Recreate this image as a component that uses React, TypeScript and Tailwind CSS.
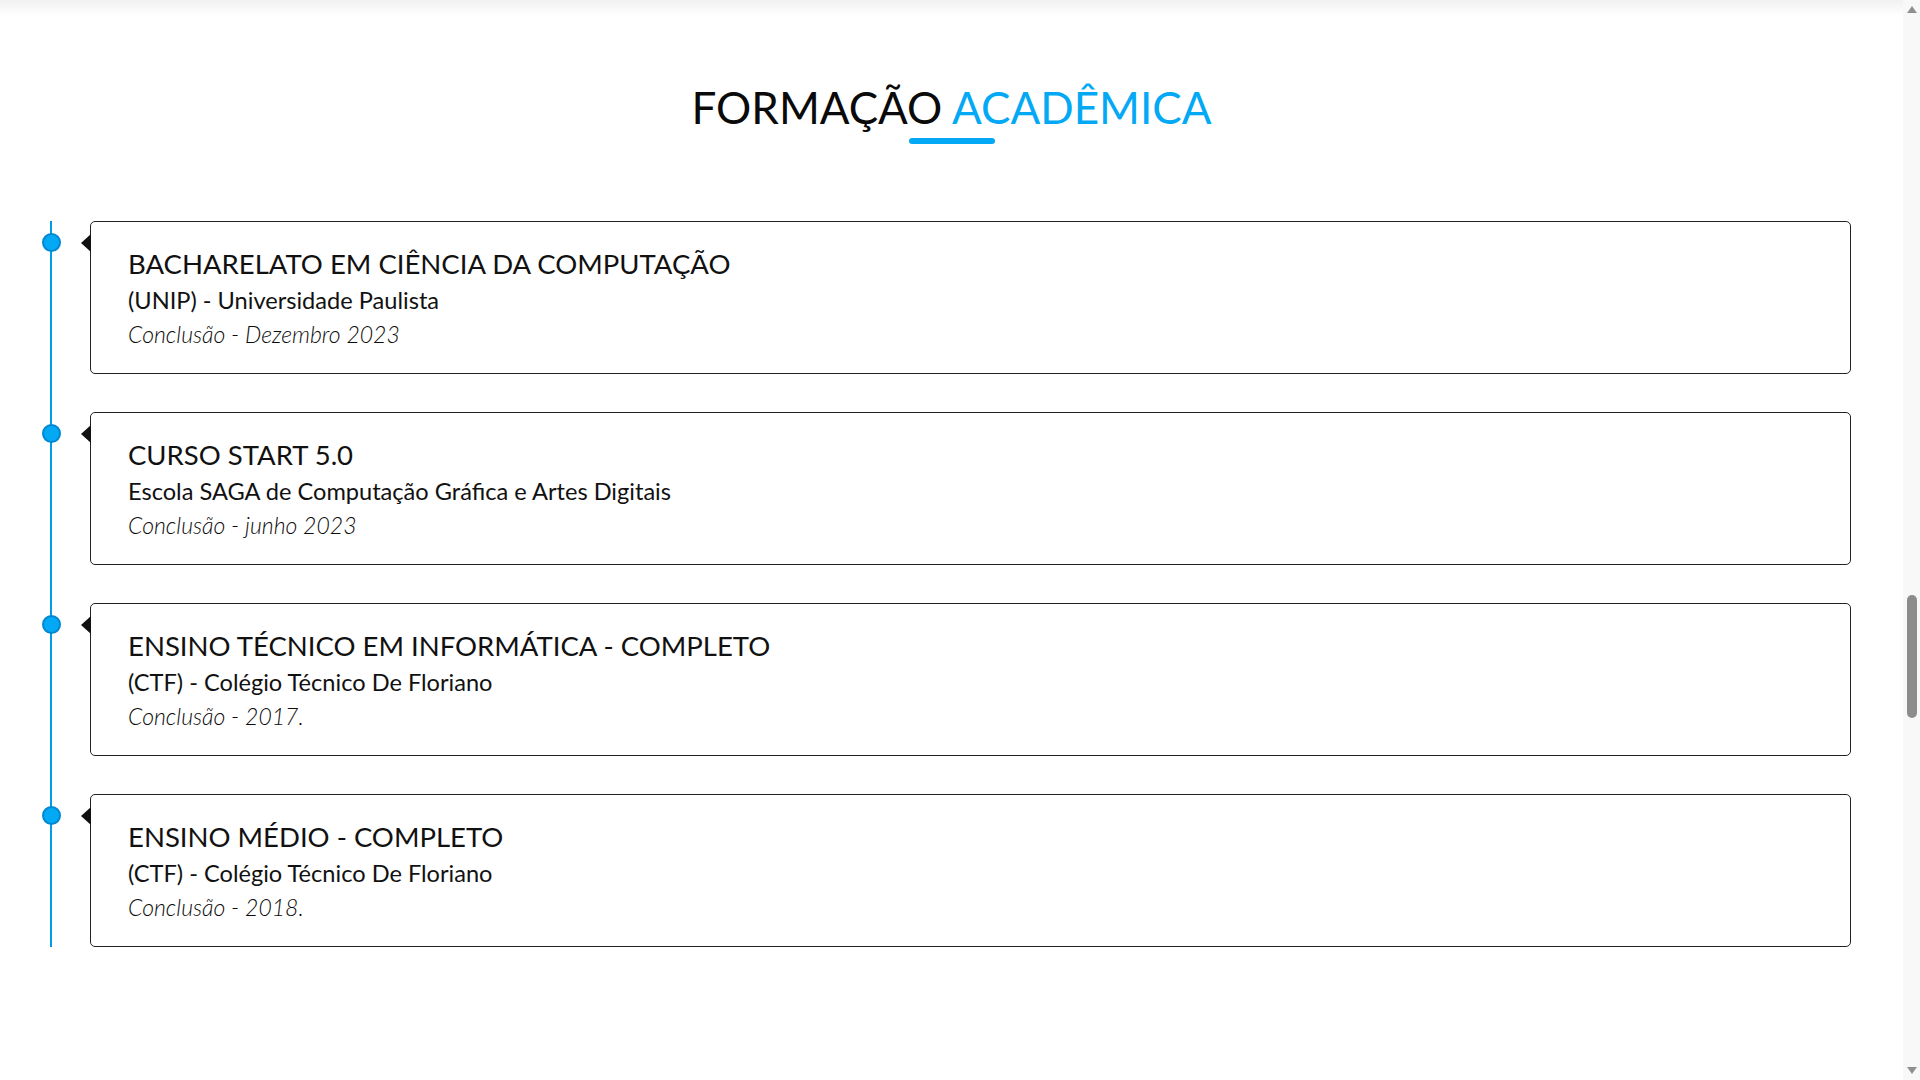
const items = [
  {
    title: 'BACHARELATO EM CIÊNCIA DA COMPUTAÇÃO',
    school: '(UNIP) - Universidade Paulista',
    date: 'Conclusão - Dezembro 2023',
  },
  {
    title: 'CURSO START 5.0',
    school: 'Escola SAGA de Computação Gráfica e Artes Digitais',
    date: 'Conclusão - junho 2023',
  },
  {
    title: 'ENSINO TÉCNICO EM INFORMÁTICA - COMPLETO',
    school: '(CTF) - Colégio Técnico De Floriano',
    date: 'Conclusão - 2017.',
  },
  {
    title: 'ENSINO MÉDIO - COMPLETO',
    school: '(CTF) - Colégio Técnico De Floriano',
    date: 'Conclusão - 2018.',
  },
];

function Scrollbar() {
  return (
    <div className="flex h-full w-[17px] shrink-0 flex-col items-center bg-[#f8f8f8]">
      <span className="mt-[6px] h-0 w-0 border-x-[5px] border-b-[7px] border-x-transparent border-b-[#8f8f8f]" />
      <div className="mt-[582px] h-[123px] w-[10px] rounded-full bg-[#8c8c8c]" />
      <div className="flex-1" />
      <span className="mb-[6px] h-0 w-0 border-x-[5px] border-t-[7px] border-x-transparent border-t-[#8f8f8f]" />
    </div>
  );
}

export default function App() {
  return (
    <div className="flex h-[1080px] overflow-hidden bg-white font-['Lato','Liberation_Sans',sans-serif] text-[#111]">
      <main className="min-w-0 flex-1">
        <div className="h-[16px] bg-gradient-to-b from-[#f1f1f1] to-white" />

        <section className="pt-[65px]">
          <h2 className="text-center text-[44px] leading-[52px] font-normal text-[#0a0a0a]">
            FORMAÇÃO <span className="text-[#03a9f4]">ACADÊMICA</span>
          </h2>
          <div className="mx-auto mt-[5px] h-[6px] w-[86px] rounded-full bg-[#03a9f4]" />

          {/* Timeline */}
          <div className="ml-[50px] mr-[52px] mt-[77px] flex flex-col gap-[38px] border-l-2 border-[#039be5]">
            {items.map((item) => (
              <div key={item.title} className="relative pl-[38px]">
                <span className="absolute left-[-10px] top-[12px] h-[19px] w-[19px] rounded-full border-2 border-[#0288d1] bg-[#03a9f4]" />
                <span className="absolute left-[29px] top-[13px] h-0 w-0 border-y-[9px] border-r-[10px] border-y-transparent border-r-[#111]" />
                <div className="h-[153px] rounded-[5px] border-[1.5px] border-[#222] bg-white pl-[37px] pt-[25px]">
                  <h3 className="text-[27.5px] leading-[34px] font-normal text-[#111]">{item.title}</h3>
                  <p className="mt-[2px] text-[23.6px] leading-[34px] text-[#111]">{item.school}</p>
                  <p className="text-[23px] leading-[34px] font-light italic text-[#0d0d0d]">{item.date}</p>
                </div>
              </div>
            ))}
          </div>
        </section>
      </main>
      <Scrollbar />
    </div>
  );
}
